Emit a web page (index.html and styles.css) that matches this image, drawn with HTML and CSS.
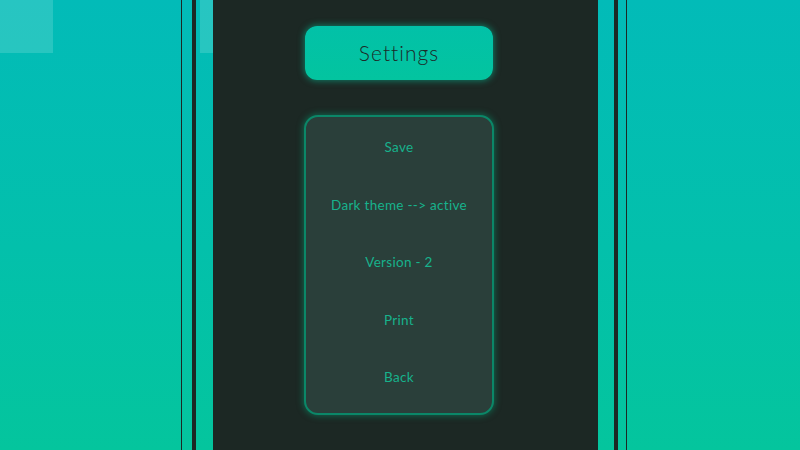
FILE: index.html
```html
<!DOCTYPE html>
<html>
<head>
<meta charset="utf-8">
<link rel="stylesheet" href="styles.css">
</head>
<body>
<div class="deco deco-a"></div>
<div class="deco deco-b"></div>
<div class="frame-outer">
  <div class="frame-inner">
    <main class="panel">
      <button class="title-btn">Settings</button>
      <nav class="menu">
        <div class="menu-item">Save</div>
        <div class="menu-item">Dark theme --&gt; active</div>
        <div class="menu-item">Version - 2</div>
        <div class="menu-item">Print</div>
        <div class="menu-item">Back</div>
      </nav>
    </main>
  </div>
</div>
</body>
</html>
```
FILE: styles.css
```css
html, body {
  margin: 0;
  padding: 0;
  width: 800px;
  height: 450px;
  overflow: hidden;
}
body {
  background: linear-gradient(180deg, #02bbb8 0%, #03c0ab 55%, #04c59d 100%);
  font-family: "Lato", "Open Sans", sans-serif;
  position: relative;
}
.deco {
  position: absolute;
  top: 0;
  width: 53px;
  height: 53px;
  background: rgba(255, 255, 255, 0.15);
  z-index: 0;
}
.deco-a { left: 0; }
.deco-b { left: 200px; }
.frame-outer {
  position: relative;
  z-index: 1;
  margin-left: 181px;
  width: fit-content;
  height: 450px;
  border-left: 1px solid #1c2824;
  border-right: 1px solid #1c2824;
  padding: 0 8px 0 10px;
  display: flex;
}
.frame-inner {
  width: 426px;
  height: 450px;
  border-left: 4px solid #1c2824;
  border-right: 4px solid #1c2824;
  padding: 0 16px 0 17px;
  box-sizing: border-box;
  display: flex;
}
.panel {
  width: 385px;
  height: 450px;
  background: #1c2824;
  box-sizing: border-box;
  padding: 26px 13px 0 0;
  display: flex;
  flex-direction: column;
  align-items: center;
  gap: 35px;
}
.title-btn {
  width: 188px;
  height: 54px;
  border: none;
  border-radius: 12px;
  background: linear-gradient(180deg, #02c1a8, #03c49f);
  box-shadow: 0 0 6px 1px rgba(6, 190, 150, 0.55);
  color: #1d2a27;
  font-family: "Lato", sans-serif;
  font-weight: 300;
  font-size: 21px;
  letter-spacing: 1px;
  padding: 0 0 2px 0;
}
.menu {
  width: 190px;
  height: 300px;
  box-sizing: border-box;
  background: #2a3f3a;
  border: 2px solid #0b8768;
  border-radius: 14px;
  box-shadow: 0 0 6px 1px rgba(8, 150, 110, 0.55);
  display: flex;
  flex-direction: column;
  gap: 41.5px;
  padding-top: 22px;
}
.menu-item {
  text-align: center;
  color: #17b28c;
  font-size: 13.5px;
  line-height: 16px;
  height: 16px;
  letter-spacing: 0.3px;
}
```
